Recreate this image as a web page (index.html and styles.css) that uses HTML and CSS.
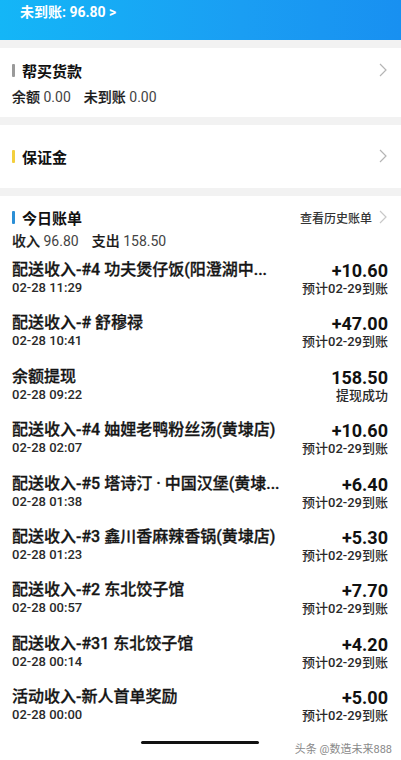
FILE: index.html
```html
<!DOCTYPE html>
<html lang="zh-CN">
<head>
    <meta charset="UTF-8">
    <meta name="viewport" content="width=device-width, initial-scale=1.0">
    <title>钱包</title>
    <link rel="stylesheet" href="styles.css">
</head>
<body>
    <div class="header">
        <span class="pending">未到账: 96.80 &gt;</span>
    </div>

    <div class="card card-buy">
        <div class="card-head">
            <span class="bar bar-grey"></span>
            <span class="card-title">帮买货款</span>
            <svg class="chevron" width="8" height="14" viewBox="0 0 8 14"><polyline points="1,1 7,7 1,13" fill="none" stroke="#b5b5b5" stroke-width="1.2"/></svg>
        </div>
        <div class="summary">
            <span>余额 <b class="num">0.00</b></span>
            <span>未到账 <b class="num">0.00</b></span>
        </div>
    </div>

    <div class="card card-deposit">
        <div class="card-head">
            <span class="bar bar-yellow"></span>
            <span class="card-title">保证金</span>
            <svg class="chevron" width="8" height="14" viewBox="0 0 8 14"><polyline points="1,1 7,7 1,13" fill="none" stroke="#b5b5b5" stroke-width="1.2"/></svg>
        </div>
    </div>

    <div class="card card-bill">
        <div class="card-head">
            <span class="bar bar-blue"></span>
            <span class="card-title">今日账单</span>
            <span class="history">查看历史账单</span>
            <svg class="chevron" width="8" height="14" viewBox="0 0 8 14"><polyline points="1,1 7,7 1,13" fill="none" stroke="#c8c8c8" stroke-width="1.2"/></svg>
        </div>
        <div class="summary summary-bill">
            <span>收入 <b class="num">96.80</b></span>
            <span>支出 <b class="num">158.50</b></span>
        </div>

        <ul class="bill-list">
            <li class="bill">
                <div class="bill-main">
                    <div class="bill-title">配送收入-#4 功夫煲仔饭(阳澄湖中...</div>
                    <div class="bill-time">02-28 11:29</div>
                </div>
                <div class="bill-side">
                    <div class="bill-amount">+10.60</div>
                    <div class="bill-note">预计02-29到账</div>
                </div>
            </li>
            <li class="bill">
                <div class="bill-main">
                    <div class="bill-title">配送收入-# 舒穆禄</div>
                    <div class="bill-time">02-28 10:41</div>
                </div>
                <div class="bill-side">
                    <div class="bill-amount">+47.00</div>
                    <div class="bill-note">预计02-29到账</div>
                </div>
            </li>
            <li class="bill">
                <div class="bill-main">
                    <div class="bill-title">余额提现</div>
                    <div class="bill-time">02-28 09:22</div>
                </div>
                <div class="bill-side">
                    <div class="bill-amount">158.50</div>
                    <div class="bill-note">提现成功</div>
                </div>
            </li>
            <li class="bill">
                <div class="bill-main">
                    <div class="bill-title">配送收入-#4 妯娌老鸭粉丝汤(黄埭店)</div>
                    <div class="bill-time">02-28 02:07</div>
                </div>
                <div class="bill-side">
                    <div class="bill-amount">+10.60</div>
                    <div class="bill-note">预计02-29到账</div>
                </div>
            </li>
            <li class="bill">
                <div class="bill-main">
                    <div class="bill-title">配送收入-#5 塔诗汀 · 中国汉堡(黄埭...</div>
                    <div class="bill-time">02-28 01:38</div>
                </div>
                <div class="bill-side">
                    <div class="bill-amount">+6.40</div>
                    <div class="bill-note">预计02-29到账</div>
                </div>
            </li>
            <li class="bill">
                <div class="bill-main">
                    <div class="bill-title">配送收入-#3 鑫川香麻辣香锅(黄埭店)</div>
                    <div class="bill-time">02-28 01:23</div>
                </div>
                <div class="bill-side">
                    <div class="bill-amount">+5.30</div>
                    <div class="bill-note">预计02-29到账</div>
                </div>
            </li>
            <li class="bill">
                <div class="bill-main">
                    <div class="bill-title">配送收入-#2 东北饺子馆</div>
                    <div class="bill-time">02-28 00:57</div>
                </div>
                <div class="bill-side">
                    <div class="bill-amount">+7.70</div>
                    <div class="bill-note">预计02-29到账</div>
                </div>
            </li>
            <li class="bill">
                <div class="bill-main">
                    <div class="bill-title">配送收入-#31 东北饺子馆</div>
                    <div class="bill-time">02-28 00:14</div>
                </div>
                <div class="bill-side">
                    <div class="bill-amount">+4.20</div>
                    <div class="bill-note">预计02-29到账</div>
                </div>
            </li>
            <li class="bill">
                <div class="bill-main">
                    <div class="bill-title">活动收入-新人首单奖励</div>
                    <div class="bill-time">02-28 00:00</div>
                </div>
                <div class="bill-side">
                    <div class="bill-amount">+5.00</div>
                    <div class="bill-note">预计02-29到账</div>
                </div>
            </li>
        </ul>
    </div>

    <div class="home-indicator"></div>
    <div class="watermark">头条 @数造未来888</div>
</body>
</html>
```

FILE: styles.css
```css
* {
    box-sizing: border-box;
}

body {
    margin: 0;
    background-color: #f2f2f2;
    font-family: Roboto, "Noto Sans CJK SC", sans-serif;
    color: #1a1a1a;
    overflow: hidden;
}

.header {
    height: 40px;
    padding: 2px 20px 0;
    background: linear-gradient(90deg, #14b6f7, #1a9ef3 60%, #1890f1);
}

.pending {
    display: block;
    line-height: 20px;
    font-size: 14px;
    font-weight: 700;
    color: #fff;
}

.card {
    margin-top: 8px;
    background-color: #fff;
    padding: 0 12px 0 12px;
}

.card-buy {
    padding-top: 11px;
    padding-bottom: 10px;
}

.card-deposit {
    padding-top: 20px;
    padding-bottom: 21px;
}

.card-bill {
    padding-top: 10px;
    padding-bottom: 40px;
}

.card-head {
    display: flex;
    align-items: center;
    height: 22px;
}

.bar {
    width: 3px;
    height: 13px;
    border-radius: 1px;
    margin-right: 7px;
}

.bar-grey {
    background-color: #9a9a9a;
}

.bar-yellow {
    background-color: #f3cf3d;
}

.bar-blue {
    background-color: #2b8fd6;
}

.card-title {
    flex: 1;
    font-size: 15px;
    font-weight: 700;
    color: #111;
}

.chevron {
    margin-right: 2px;
}

.history {
    font-size: 12px;
    font-weight: 500;
    color: #333;
    margin-right: 7px;
}

.summary {
    display: flex;
    gap: 13px;
    margin-top: 6px;
    line-height: 20px;
    font-size: 14px;
    font-weight: 500;
    color: #1a1a1a;
    -webkit-text-stroke: 0.2px #1a1a1a;
}

.summary-bill {
    margin-top: 3px;
}

.num {
    font-weight: 400;
    color: #444;
    -webkit-text-stroke: 0;
}

.bill-list {
    list-style: none;
    margin: 1px 1px 0 0;
    padding: 0;
}

.bill {
    display: flex;
    justify-content: space-between;
    padding: 8px 0 9.4px;
}

.bill-main {
    min-width: 0;
}

.bill-title {
    line-height: 20px;
    font-size: 16px;
    font-weight: 500;
    color: #151515;
    white-space: nowrap;
    -webkit-text-stroke: 0.3px #151515;
}

.bill-time {
    line-height: 16px;
    font-size: 13px;
    font-weight: 500;
    color: #2a2a2a;
    white-space: nowrap;
}

.bill-side {
    text-align: right;
}

.bill-amount {
    line-height: 21px;
    font-size: 18px;
    font-weight: 700;
    color: #111;
}

.bill-note {
    line-height: 15px;
    font-size: 13px;
    font-weight: 500;
    color: #2a2a2a;
    white-space: nowrap;
}

.home-indicator {
    position: absolute;
    left: 141px;
    top: 741px;
    width: 118px;
    height: 3px;
    border-radius: 2px;
    background-color: #111;
}

.watermark {
    position: absolute;
    right: 9px;
    top: 740px;
    font-size: 11px;
    color: #8a8a8a;
}
```
